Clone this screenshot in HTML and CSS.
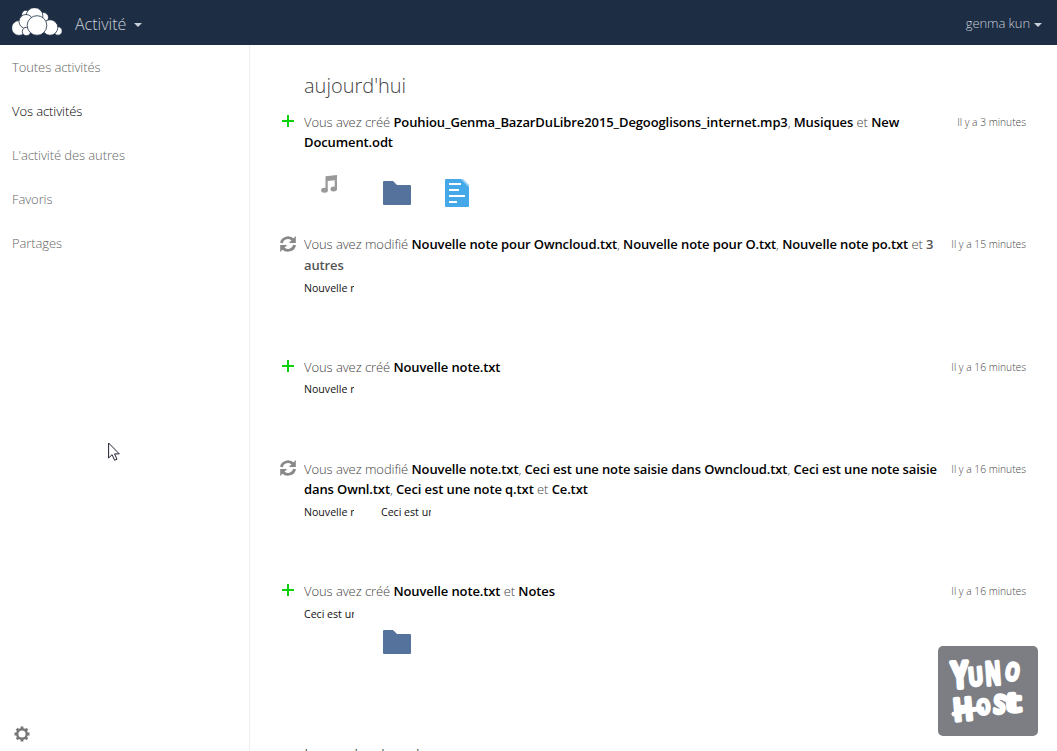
FILE: index.html
```html
<!DOCTYPE html>
<html lang="fr">
<head>
<meta charset="utf-8">
<title>Activité</title>
<link rel="stylesheet" href="styles.css">
</head>
<body>
<svg class="defs" aria-hidden="true">
  <symbol id="plus" viewBox="0 0 16 16"><path d="M8 2v12M2 8h12" stroke="#0cd20c" stroke-width="2" fill="none"/></symbol>
  <symbol id="sync" viewBox="0 0 16 16"><path d="M1.4 7A6.7 6.2 0 0 1 13 3.8M14.6 9A6.7 6.2 0 0 1 3 12.2" fill="none" stroke="#888" stroke-width="2.8"/><path d="M15.8 0v7H8.8zM.2 16V9H7.2z" fill="#888"/></symbol>
  <symbol id="folder" viewBox="0 0 28 24"><path d="M0 1q0-1 1-1h9l4 4h13q1 0 1 1v18q0 1-1 1H1q-1 0-1-1z" fill="#54729b"/></symbol>
</svg>
<header class="header">
  <div class="brand">
    <svg class="cloud" viewBox="0 0 50 28" width="50" height="28"><g fill="#fff" stroke="#1d2d44" stroke-width=".8"><circle cx="14" cy="6.5" r="4.3"/><circle cx="31.5" cy="9.5" r="5"/><circle cx="22.5" cy="8" r="8.4"/><circle cx="7" cy="20" r="7.4"/><circle cx="14" cy="13.5" r="7"/><circle cx="46" cy="23" r="4.2"/><circle cx="38" cy="19.5" r="7.8"/><circle cx="14.5" cy="23.5" r="4.2"/><circle cx="25" cy="17.5" r="9.8"/></g></svg>
    <span class="app">Activité</span><i class="caret"></i>
  </div>
  <div class="user"><span>genma kun</span><i class="caret"></i></div>
</header>
<div class="body">
  <nav class="nav">
    <a>Toutes activités</a><a class="active">Vos activités</a><a>L'activité des autres</a><a>Favoris</a><a>Partages</a>
    <svg class="gear" viewBox="0 0 16 16" width="16" height="16"><circle cx="8" cy="8" r="4.8" fill="none" stroke="#777" stroke-width="2.4"/><path d="M8 .5v2.5M8 13v2.5M.5 8H3M13 8h2.5M2.7 2.7l1.8 1.8M11.5 11.5l1.8 1.8M2.7 13.3l1.8-1.8M11.5 4.5l1.8-1.8" stroke="#777" stroke-width="2.8"/></svg>
  </nav>
  <main class="main">
    <h2>aujourd'hui</h2>
    <section class="item">
      <svg class="kind"><use href="#plus"/></svg>
      <div class="content"><p>Vous avez créé <b>Pouhiou_Genma_BazarDuLibre2015_Degooglisons_internet.mp3</b>, <b>Musiques</b> et <b>New Document.odt</b></p>
        <div class="icons">
          <svg class="music" viewBox="0 0 16 18" width="16" height="18"><path d="M4.5 1.2L16 0v5L6.7 6v9H4.5zM13.7 3H16v11h-2.3z" fill="#999"/><ellipse cx="3.5" cy="15.3" rx="3.4" ry="2.5" fill="#999"/><ellipse cx="12.8" cy="14" rx="3.3" ry="2.5" fill="#999"/></svg>
          <svg class="folder"><use href="#folder"/></svg>
          <svg class="doc" viewBox="0 0 24 28" width="24" height="28"><path d="M0 1q0-1 1-1h15l8 8v19q0 1-1 1H1q-1 0-1-1z" fill="#45a8e8"/><path d="M16 0l8 8v-2L18 0z" fill="#8ccaf1"/><path d="M4 5h12M4 11h10M4 17h16M4 23h8" stroke="#fff" stroke-width="2"/></svg>
        </div></div>
      <time>Il y a 3 minutes</time>
    </section>
    <section class="item">
      <svg class="kind"><use href="#sync"/></svg>
      <div class="content"><p>Vous avez modifié <b>Nouvelle note pour Owncloud.txt</b>, <b>Nouvelle note pour O.txt</b>, <b>Nouvelle note po.txt</b> et <b class="more">3 autres</b></p>
        <div class="thumbs"><span>Nouvelle note</span></div></div>
      <time>Il y a 15 minutes</time>
    </section>
    <section class="item">
      <svg class="kind"><use href="#plus"/></svg>
      <div class="content"><p>Vous avez créé <b>Nouvelle note.txt</b></p>
        <div class="thumbs"><span>Nouvelle note</span></div></div>
      <time>Il y a 16 minutes</time>
    </section>
    <section class="item">
      <svg class="kind"><use href="#sync"/></svg>
      <div class="content"><p>Vous avez modifié <b>Nouvelle note.txt</b>, <b>Ceci est une note saisie dans Owncloud.txt</b>, <b>Ceci est une note saisie dans Ownl.txt</b>, <b>Ceci est une note q.txt</b> et <b>Ce.txt</b></p>
        <div class="thumbs"><span>Nouvelle note</span><span>Ceci est une note</span></div></div>
      <time>Il y a 16 minutes</time>
    </section>
    <section class="item last">
      <svg class="kind"><use href="#plus"/></svg>
      <div class="content"><p>Vous avez créé <b>Nouvelle note.txt</b> et <b>Notes</b></p>
        <div class="thumbs"><span>Ceci est une note</span><svg class="folder"><use href="#folder"/></svg></div></div>
      <time>Il y a 16 minutes</time>
    </section>
    <h2>le mois dernier</h2>
  </main>
</div>
<svg class="badge" viewBox="0 0 100 90" width="100" height="90">
  <rect width="100" height="90" rx="5" fill="#7c7e84"/>
  <g class="lettering">
    <text transform="translate(14 42) rotate(-3) scale(.84 1.12)">Y</text>
    <text transform="translate(31 40) rotate(-5) scale(.62 .78)">U</text>
    <text transform="translate(48 39) rotate(-4) scale(.6 .98)">N</text>
    <text transform="translate(66 33) rotate(10) scale(.56 .76)">O</text>
    <text transform="translate(16 75) rotate(-5) scale(.82 .96)">H</text>
    <text transform="translate(39 69) rotate(-5) scale(.56 .66)">O</text>
    <text transform="translate(55 67) rotate(3) scale(.68 .8)">S</text>
    <text transform="translate(67 66) rotate(-2) scale(1.2 .86)">t</text>
  </g>
  <path d="M16 68q15-5 28-5" fill="none" stroke="#fff" stroke-width="5" stroke-linecap="round"/>
</svg>
<svg class="cursor" viewBox="0 0 12 19" width="12" height="19"><path d="M.6 1v15l3.5-3.3 2.5 5.6 2.4-1.1-2.5-5.3h4.8z" fill="#fff" stroke="#223" stroke-width="1"/></svg>
</body>
</html>
```
FILE: styles.css
```css
* { box-sizing: border-box; }
body { margin: 0; height: 751px; overflow: hidden; background: #fff; font: 300 13px/20.4px "Open Sans", sans-serif; color: #444; display: flex; flex-direction: column; }
.defs { position: absolute; width: 0; height: 0; }
.header { flex: 0 0 45px; background: #1d2d44; display: flex; justify-content: space-between; align-items: center; padding: 0 15px 0 12px; color: #c8d0d9; }
.brand, .user { display: flex; align-items: center; }
.cloud { margin: -1px 13px 0 0; }
.app { font-size: 16px; line-height: 24px; margin-top: 2px; }
.caret { border: 4px solid transparent; border-top-color: #c8d0d9; border-bottom: 0; margin: 4px 0 0 8px; }
.user .caret { margin: 3px 0 0 4px; }
.user { padding-top: 2px; letter-spacing: -.08px; }
.body { flex: 1; display: flex; min-height: 0; }
.nav { width: 250px; border-right: 1px solid #eee; display: flex; flex-direction: column; letter-spacing: -.09px; }
.nav a { height: 44px; line-height: 44px; padding-left: 12px; color: #666; }
.nav .active { color: #000; }
.gear { flex: none; margin: auto 0 9px 14px; }
.main { flex: 1; min-width: 0; padding: 26px 31px 0 30px; }
h2 { font-size: 20px; font-weight: 300; line-height: 30px; height: 30px; margin: 0 0 11px 24px; color: #444; }
.item { display: flex; align-items: flex-start; margin-bottom: 18.5px; }
.kind { width: 16px; height: 16px; margin: 1.3px 8px 0 0; flex: none; }
.content { width: 640px; }
p { margin: 0; letter-spacing: -.07px; }
b { font-weight: 600; color: #000; letter-spacing: -.108px; }
b.more { color: #555; }
time { margin-left: auto; font-size: 10.25px; white-space: nowrap; color: #444; }
.icons, .thumbs { display: flex; align-items: flex-start; height: 63px; }
.folder { width: 28px; height: 24px; }
.music { margin: 22px 46px 0 17px; }
.icons .folder { margin: 28px 34px 0 0; }
.doc { margin-top: 26px; }
.thumbs { padding-top: 2.4px; gap: 27px; }
.thumbs span { width: 50px; overflow: hidden; white-space: nowrap; font-size: 10.6px; font-weight: 400; color: #111; line-height: 20px; }
.thumbs .folder { margin: 26px 0 0 2px; }
.last { margin-bottom: 78px; }
.badge { position: absolute; left: 938px; top: 646px; }
.lettering { font: 700 32px "Open Sans", sans-serif; fill: #fff; stroke: #fff; stroke-width: 4px; stroke-linejoin: round; }
.cursor { position: absolute; left: 108px; top: 442px; }
```
